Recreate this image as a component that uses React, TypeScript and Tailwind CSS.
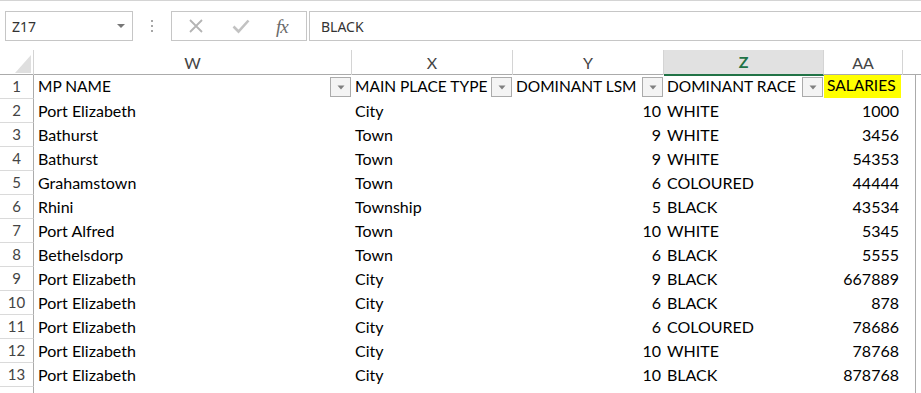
import React from 'react';

const cols = 'grid grid-cols-[34px_318px_161px_151px_160px_79px_13px]';

const rows = [
  ['Port Elizabeth', 'City', '10', 'WHITE', '1000'],
  ['Bathurst', 'Town', '9', 'WHITE', '3456'],
  ['Bathurst', 'Town', '9', 'WHITE', '54353'],
  ['Grahamstown', 'Town', '6', 'COLOURED', '44444'],
  ['Rhini', 'Township', '5', 'BLACK', '43534'],
  ['Port Alfred', 'Town', '10', 'WHITE', '5345'],
  ['Bethelsdorp', 'Town', '6', 'BLACK', '5555'],
  ['Port Elizabeth', 'City', '9', 'BLACK', '667889'],
  ['Port Elizabeth', 'City', '6', 'BLACK', '878'],
  ['Port Elizabeth', 'City', '6', 'COLOURED', '78686'],
  ['Port Elizabeth', 'City', '10', 'WHITE', '78768'],
  ['Port Elizabeth', 'City', '10', 'BLACK', '878768'],
];

function FilterButton() {
  return (
    <div className="ml-auto mr-[1px] w-[21px] h-[20px] border border-[#ababab] bg-[#f4f4f4] flex items-center justify-center shrink-0">
      <svg width="8" height="5" viewBox="0 0 8 5">
        <path d="M0.5 0.5 L7.5 0.5 L4 4.5 Z" fill="#808080" />
      </svg>
    </div>
  );
}

function FormulaBar() {
  return (
    <div className="h-[50px] border-t border-[#d4d4d4] pt-[10px] flex items-start font-['Noto_Sans',sans-serif]">
      {/* Name box */}
      <div className="ml-[5px] w-[128px] h-[30px] border border-[#c6c6c6] flex items-center pl-[6px] pr-[7px]">
        <span className="text-[14px] text-[#333]">Z17</span>
        <svg className="ml-auto" width="8" height="4" viewBox="0 0 8 4">
          <path d="M0 0 L8 0 L4 4 Z" fill="#777" />
        </svg>
      </div>
      {/* grip dots */}
      <div className="w-[38px] h-[30px] flex flex-col items-center justify-center gap-[3px]">
        <span className="w-[2px] h-[2px] bg-[#a6a6a6]" />
        <span className="w-[2px] h-[2px] bg-[#a6a6a6]" />
        <span className="w-[2px] h-[2px] bg-[#a6a6a6]" />
      </div>
      {/* cancel / enter / fx */}
      <div className="w-[136px] h-[30px] border border-[#c6c6c6] flex items-center">
        <svg className="ml-[16px]" width="16" height="16" viewBox="0 0 16 16">
          <path d="M2 2 L14 14 M14 2 L2 14" stroke="#b4b4b4" strokeWidth="1.8" />
        </svg>
        <svg className="ml-[28px]" width="18" height="16" viewBox="0 0 18 16">
          <path d="M1.5 8.5 L6.5 13.5 L16.5 2.5" stroke="#c2c2c2" strokeWidth="2.6" fill="none" />
        </svg>
        <span className="ml-[26px] font-['Liberation_Serif',serif] italic text-[19px] leading-none text-[#6a6a6a] tracking-[-1px]">
          fx
        </span>
      </div>
      {/* formula input */}
      <div className="ml-[2px] flex-1 -mr-[2px] h-[30px] border border-[#c6c6c6] flex items-center pl-[11px]">
        <span className="text-[14px] text-[#333]">BLACK</span>
      </div>
    </div>
  );
}

function ColumnHeaders() {
  const letters = ['W', 'X', 'Y', 'Z', 'AA'];
  return (
    <div className={`${cols} h-[25px] border-b border-[#ababab]`}>
      <div className="relative border-r border-[#d4d4d4]">
        <svg className="absolute right-[2px] bottom-[2px]" width="16" height="18" viewBox="0 0 16 18">
          <path d="M16 0 L16 18 L0 18 Z" fill="#dfdfdf" />
        </svg>
      </div>
      {letters.map((l) =>
        l === 'Z' ? (
          <div
            key={l}
            className="bg-[#e1e1e1] border-r border-[#d4d4d4] border-b-2 border-b-[#217346] -mb-[1px] flex items-center justify-center text-[16px] font-bold text-[#217346]"
          >
            {l}
          </div>
        ) : (
          <div key={l} className="border-r border-[#d4d4d4] flex items-center justify-center text-[16px] text-[#444]">
            {l}
          </div>
        )
      )}
      <div />
    </div>
  );
}

function RowHeader({ n }: { n?: number }) {
  return (
    <div className="border-r border-[#ababab] border-b border-b-[#dadada] flex items-center justify-center text-[15px] text-[#444]">
      {n}
    </div>
  );
}

export default function App() {
  return (
    <div className="w-[921px] h-[393px] overflow-hidden bg-white font-['Lato',sans-serif] text-black whitespace-nowrap">
      <FormulaBar />
      <ColumnHeaders />

      {/* header row with filters */}
      <div className={`${cols} h-[24px] text-[15.5px]`}>
        <RowHeader n={1} />
        <div className="flex items-center pl-[4px] min-w-0">
          <span>MP NAME</span>
          <FilterButton />
        </div>
        <div className="flex items-center pl-[3px] min-w-0">
          <span>MAIN PLACE TYPE</span>
          <FilterButton />
        </div>
        <div className="flex items-center pl-[3px] min-w-0">
          <span>DOMINANT LSM</span>
          <FilterButton />
        </div>
        <div className="flex items-center pl-[3px] min-w-0">
          <span>DOMINANT RACE</span>
          <FilterButton />
        </div>
        <div className="flex items-center min-w-0">
          <span className="bg-[#ffff00] w-[77px] h-[23px] -mt-[2px] pl-[3px] flex items-center">SALARIES</span>
        </div>
        <div className="border-r border-[#ababab]" />
      </div>

      {rows.map((r, i) => (
        <div key={i} className={`${cols} h-[24px] text-[16px]`}>
          <RowHeader n={i + 2} />
          <div className="flex items-center pl-[4px]">{r[0]}</div>
          <div className="flex items-center pl-[3px]">{r[1]}</div>
          <div className="flex items-center justify-end pr-[3px]">{r[2]}</div>
          <div className="flex items-center pl-[3px]">{r[3]}</div>
          <div className="flex items-center justify-end pr-[4px]">{r[4]}</div>
          <div className="border-r border-[#ababab]" />
        </div>
      ))}

      <div className={`${cols} h-[24px]`}>
        <RowHeader />
        <div />
        <div />
        <div />
        <div />
        <div />
        <div className="border-r border-[#ababab]" />
      </div>
    </div>
  );
}
